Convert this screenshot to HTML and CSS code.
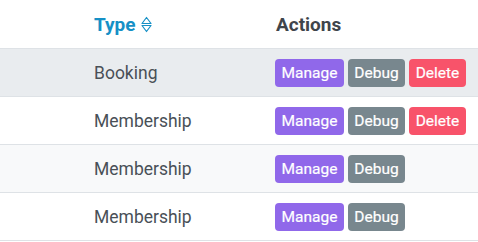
FILE: index.html
```html
<!DOCTYPE html>
<html>
<head>
<meta charset="utf-8">
<link rel="stylesheet" href="styles.css">
</head>
<body>
<table class="grid">
  <thead>
    <tr>
      <th class="c-lead"></th>
      <th class="c-type">
        <span class="sort">Type
          <svg class="sort-icon" width="11" height="17" viewBox="0 0 11 17"><path d="M1 7.5 L5.5 1.5 L10 7.5 Z M1 9.5 L5.5 15.5 L10 9.5 Z" fill="none" stroke="#1690c6" stroke-width="1.2" stroke-linejoin="round"/></svg>
        </span>
      </th>
      <th class="c-actions">Actions</th>
    </tr>
  </thead>
  <tbody>
    <tr class="row-hover">
      <td></td>
      <td>Booking</td>
      <td><div class="btns"><span class="btn btn-manage">Manage</span><span class="btn btn-debug">Debug</span><span class="btn btn-delete">Delete</span></div></td>
    </tr>
    <tr>
      <td></td>
      <td>Membership</td>
      <td><div class="btns"><span class="btn btn-manage">Manage</span><span class="btn btn-debug">Debug</span><span class="btn btn-delete">Delete</span></div></td>
    </tr>
    <tr class="row-stripe">
      <td></td>
      <td>Membership</td>
      <td><div class="btns"><span class="btn btn-manage">Manage</span><span class="btn btn-debug">Debug</span></div></td>
    </tr>
    <tr>
      <td></td>
      <td>Membership</td>
      <td><div class="btns"><span class="btn btn-manage">Manage</span><span class="btn btn-debug">Debug</span></div></td>
    </tr>
  </tbody>
</table>
</body>
</html>
```

FILE: styles.css
```css
html, body {
  margin: 0;
  padding: 0;
  background: #ffffff;
}
body {
  font-family: Roboto, "Liberation Sans", sans-serif;
  color: #495057;
}
.grid {
  width: 100%;
  border-collapse: collapse;
  table-layout: fixed;
}
.grid th {
  height: 48px;
  text-align: left;
  font-size: 19px;
  font-weight: 700;
  color: #3f454b;
  padding: 0 0 0 16px;
  border-bottom: 1px solid #dee2e6;
  vertical-align: middle;
}
.grid th.c-lead { width: 78px; padding: 0; }
.grid th.c-type { width: 166px; }
.grid td {
  height: 47px;
  padding: 0 0 0 16px;
  font-size: 17.5px;
  color: #495057;
  border-bottom: 1px solid #dee2e6;
  vertical-align: middle;
}
.grid td:first-child { padding: 0; }
.grid td:last-child { padding-left: 15px; }
.row-hover td { background: #e9ecef; }
.row-stripe td { background: #f8f9fa; }
.sort {
  color: #1690c6;
  display: inline-flex;
  align-items: center;
  gap: 5px;
}
.sort-icon { display: block; }
.btns {
  display: flex;
  gap: 4px;
}
.btn {
  display: inline-flex;
  align-items: center;
  justify-content: center;
  height: 28px;
  border-radius: 4px;
  color: #ffffff;
  font-size: 15.5px;
  font-weight: 400;
  -webkit-text-stroke: 0.2px #ffffff;
}
.btn-manage { background: #9068ea; width: 69px; }
.btn-debug { background: #78878e; width: 57px; }
.btn-delete { background: #f8536a; width: 57px; }
```
